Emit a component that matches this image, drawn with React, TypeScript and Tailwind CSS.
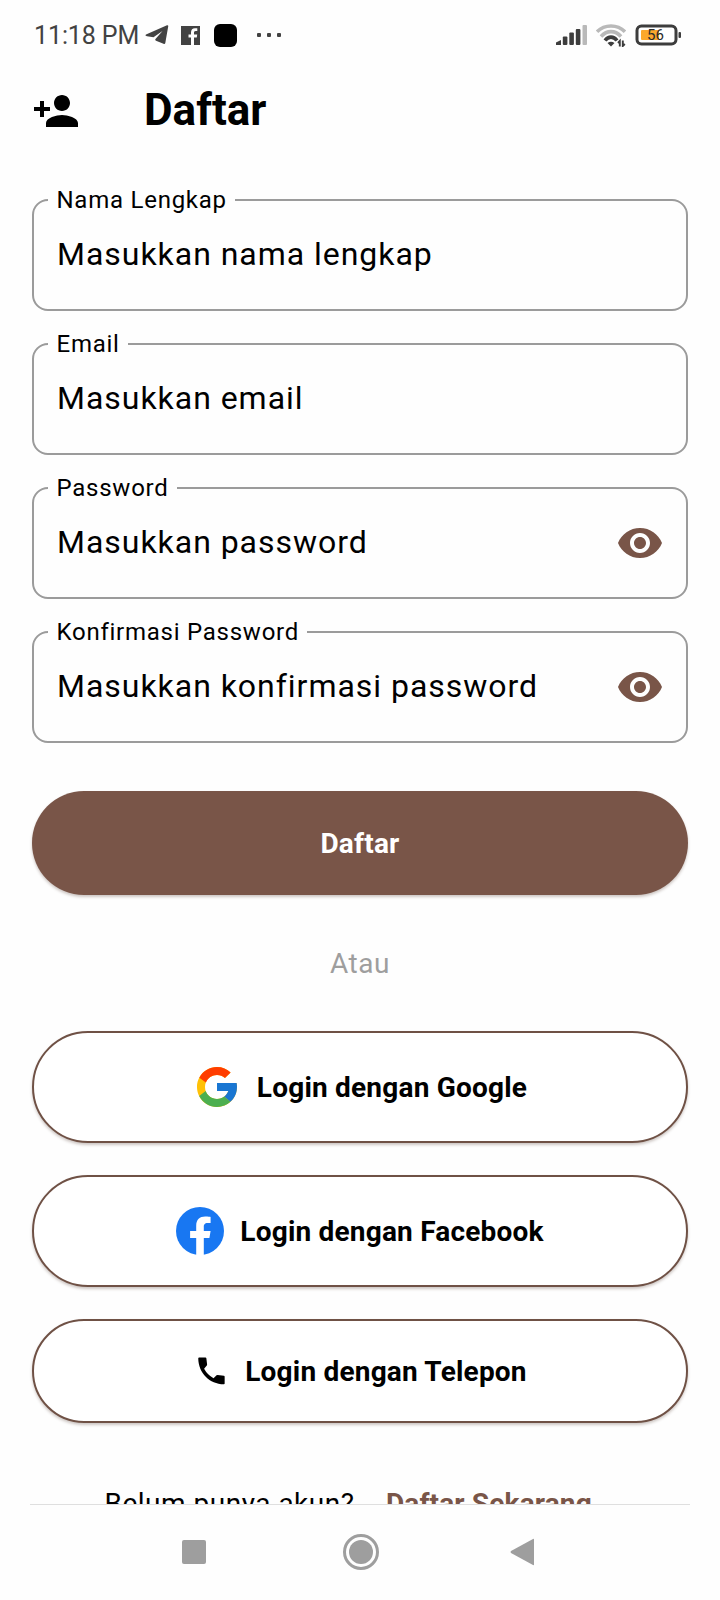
import React from "react";
import { MdPersonAdd, MdVisibility } from "react-icons/md";
import { FcGoogle } from "react-icons/fc";

function StatusBar() {
  return (
    <header className="flex h-[68px] shrink-0 items-center pt-[2px] pr-[38px] pl-[34px] text-[#424242]">
      <span className="w-[108px] pt-[1px] text-[25px] leading-none tracking-[-0.1px] whitespace-nowrap">11:18 PM</span>
      <svg className="ml-[3px] h-5 w-[24px]" viewBox="0 0 24 20" fill="currentColor">
        <path d="M1 9.500 22 0.300Q23.500 0 23.200 1.500L20.300 18Q20 19.400 18.500 18.800L11 15.800Q9.800 15 10.500 14L17.500 6 8.500 12.300 2 11.300Q-.5 10.700 1 9.500Z" />
      </svg>
      <svg className="ml-[12px] h-[19px] w-[19px]" viewBox="0 0 19 19">
        <path fill="currentColor" d="M0 0H19V19H13V11.500H15.800L16.200 8.500H13V6.800C13 5.700 13.400 5 14.700 5H16.300V2.200H14C11.500 2.200 10 3.800 10 6.300V8.500H7.500V11.500H10V19H0Z" />
      </svg>
      <span className="ml-[13.500px] h-[23px] w-[23px] rounded-[6px] bg-black" />
      <span className="ml-[20px] flex gap-[6px]">
        <i className="size-[4px] rounded-[1px] bg-current" />
        <i className="size-[4px] rounded-[1px] bg-current" />
        <i className="size-[4px] rounded-[1px] bg-current" />
      </span>
      <svg className="ml-auto h-[22px] w-[32px]" viewBox="0 0 32 22" fill="#3d3d3d">
        <path d="M0 21V18.500L5 16V21Z" />
        <rect x="6.800" y="12.500" width="4.600" height="8.500" rx="1" />
        <rect x="13.300" y="8.500" width="4.600" height="12.500" rx="1" />
        <rect x="19.800" y="5" width="4.600" height="16" rx="1" />
        <rect x="26.500" y="1" width="4.500" height="20" rx="1" fill="#b9b9b9" />
      </svg>
      <svg className="ml-[8px] h-[24px] w-[30px]" viewBox="0 0 30 24" fill="none" strokeWidth="3.600">
        <path d="M1 8.800C8.500 1 21.500 1 29 8.800" stroke="#b9b9b9" />
        <path d="M5 13.500C11 7 19 7 25 13.500" stroke="#b9b9b9" />
        <path d="M9 17.500C12.500 13 17.500 13 21 17.500" stroke="#3d3d3d" />
        <path d="M11.500 20Q15 17.500 18.500 20L15 23.500Z" fill="#3d3d3d" />
        <path d="M23.800 23.500V18L22 20M26.800 17.500V23L28.800 21" stroke="#3d3d3d" strokeWidth="1.900" />
      </svg>
      <svg className="ml-[9px] h-[22px] w-[47px]" viewBox="0 0 47 22">
        <rect x="2" y="2" width="39" height="18" rx="4.500" fill="#fff" stroke="#3d3d3d" strokeWidth="3" />
        <rect x="6" y="6" width="18" height="10" rx="1" fill="#fca82c" />
        <rect x="43.500" y="8" width="2.500" height="6" rx="1" fill="#3d3d3d" />
        <text x="20.500" y="16" textAnchor="middle" fontSize="15" fill="#2b2b2b">56</text>
      </svg>
    </header>
  );
}

function Field({ label, placeholder, secret = false }: { label: string; placeholder: string; secret?: boolean }) {
  return (
    <fieldset className="flex h-[125px] min-w-0 items-start justify-between rounded-2xl border-2 border-[#9b9b9b] pr-[22px] pl-[23px] text-black">
      <legend className="-ml-[9px] h-7 pr-[8px] pl-[8.500px] text-[24px] leading-7 tracking-[0.75px] whitespace-nowrap">{label}</legend>
      <span className="mt-[20px] text-[32px] leading-10 tracking-[0.97px] whitespace-nowrap">{placeholder}</span>
      {secret && <MdVisibility className="mt-[17px] size-12 text-[#795548]" />}
    </fieldset>
  );
}

function SocialButton({ children, label, size }: { children: React.ReactNode; label: string; size: string }) {
  return (
    <button
      className={`flex w-full shrink-0 items-center justify-center rounded-full border-2 border-[#6f5145] bg-white text-[28px] font-bold tracking-[0.2px] text-black shadow-[0_2px_3px_rgba(60,30,20,0.25)] ${size}`}
    >
      {children}
      <span className="pt-[2px] whitespace-nowrap">{label}</span>
    </button>
  );
}

export default function App() {
  return (
    <div className="flex h-[1600px] w-[720px] flex-col overflow-hidden bg-[#fefefe] font-['Roboto',sans-serif]">
      <StatusBar />
      <div className="flex h-[84px] shrink-0 items-center px-8">
        <MdPersonAdd className="mt-[2px] size-12 text-black" />
        <h1 className="ml-16 text-[44px] leading-none font-bold text-black">Daftar</h1>
      </div>
      <main className="flex h-[1352px] shrink-0 flex-col overflow-hidden px-8 pt-[34px]">
        <div className="flex flex-col gap-[19px]">
          <Field label="Nama Lengkap" placeholder="Masukkan nama lengkap" />
          <Field label="Email" placeholder="Masukkan email" />
          <Field label="Password" placeholder="Masukkan password" secret />
          <Field label="Konfirmasi Password" placeholder="Masukkan konfirmasi password" secret />
        </div>
        <button className="mt-12 h-[104px] shrink-0 rounded-full bg-[#795548] pt-[2px] text-[28px] font-bold tracking-[0.2px] text-white shadow-[0_2px_3px_rgba(60,30,20,0.25)]">
          Daftar
        </button>
        <p className="mt-[49px] h-10 shrink-0 text-center text-[28px] leading-10 tracking-[0.5px] text-[#9e9e9e]">Atau</p>
        <div className="mt-[47px] flex shrink-0 flex-col gap-8">
          <SocialButton label="Login dengan Google" size="h-28">
            <FcGoogle className="mr-4 size-12" />
          </SocialButton>
          <SocialButton label="Login dengan Facebook" size="h-28">
            <svg className="mr-4 size-12" viewBox="0 0 24 24">
              <circle cx="12" cy="12" r="12" fill="#1877f2" />
              <path
                fill="#fff"
                d="M10.100 24V15.550H7.050V12H10.100V9.350C10.100 6.350 11.900 4.800 14.600 4.800C15.900 4.800 17.300 5 17.300 5V8.050H15.800C14.300 8.050 13.900 8.950 13.900 9.900V12H17.300L16.700 15.550H13.900V24Z"
              />
            </svg>
          </SocialButton>
          <SocialButton label="Login dengan Telepon" size="h-[104px]">
            <svg className="mr-4 size-9" viewBox="0 0 24 24" fill="currentColor">
              <path d="M4.100 3H8.300Q8.800 3 8.900 3.500L9.400 7.700Q9.400 8.100 9.200 8.400L7.400 10.500Q9.600 14.600 13.700 16.800L15.700 14.900Q16 14.700 16.400 14.700L20.600 15.200Q21.100 15.300 21.100 15.800V20.400Q21.100 20.900 20.600 20.900C11 20.800 3.700 13.500 3.500 3.700Q3.500 3 4.100 3Z" />
            </svg>
          </SocialButton>
        </div>
        <p className="mt-[61px] flex shrink-0 pl-[72.500px] text-[28px] leading-10 whitespace-nowrap text-black">
          <span className="tracking-[0.5px]">Belum punya akun?</span>
          <span className="ml-[31.500px] font-bold tracking-[0.15px] text-[#795548]">Daftar Sekarang</span>
        </p>
      </main>
      <nav className="mx-[30px] flex h-24 shrink-0 items-center justify-between border-t border-[#dfdfdf] pr-[156px] pb-[2px] pl-[152px] text-[#9e9e9e]">
        <span className="size-6 rounded-[2px] bg-current" />
        <span className="ml-[5px] flex size-9 items-center justify-center rounded-full border-[3px] border-current">
          <span className="size-6 rounded-full bg-current" />
        </span>
        <svg className="h-7 w-6" viewBox="0 0 24 28" fill="currentColor">
          <path d="M24 1.500V26.500Q24 27.500 23 27L1 15Q0 14 1 13L23 1Q24 .5 24 1.500Z" />
        </svg>
      </nav>
    </div>
  );
}
